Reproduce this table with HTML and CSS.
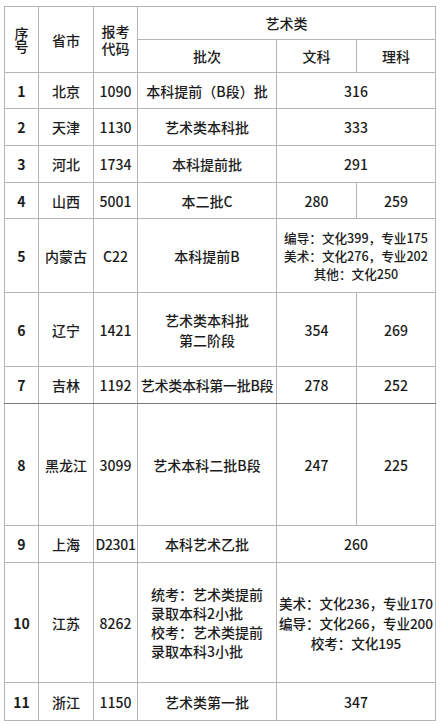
FILE: index.html
```html
<!DOCTYPE html>
<html lang="zh-CN">
<head>
<meta charset="utf-8">
<title>艺术类分数线</title>
<link rel="stylesheet" href="styles.css">
</head>
<body>
<div class="wrap">
<table class="score">
  <colgroup>
    <col class="c1"><col class="c2"><col class="c3"><col class="c4"><col class="c5"><col class="c6">
  </colgroup>
  <thead>
    <tr class="h1">
      <th rowspan="2" class="narrow">序号</th>
      <th rowspan="2">省市</th>
      <th rowspan="2" class="code">报考代码</th>
      <th colspan="3">艺术类</th>
    </tr>
    <tr class="h2">
      <th>批次</th>
      <th>文科</th>
      <th>理科</th>
    </tr>
  </thead>
  <tbody>
    <tr class="r36"><td class="num">1</td><td>北京</td><td>1090</td><td>本科提前（B段）批</td><td colspan="2">316</td></tr>
    <tr class="r37"><td class="num">2</td><td>天津</td><td>1130</td><td>艺术类本科批</td><td colspan="2">333</td></tr>
    <tr class="r37"><td class="num">3</td><td>河北</td><td>1734</td><td>本科提前批</td><td colspan="2">291</td></tr>
    <tr class="r36"><td class="num">4</td><td>山西</td><td>5001</td><td>本二批C</td><td>280</td><td>259</td></tr>
    <tr class="r74"><td class="num">5</td><td>内蒙古</td><td>C22</td><td>本科提前B</td><td colspan="2" class="small">编导：文化399，专业175<br>美术：文化276，专业202<br>其他：文化250</td></tr>
    <tr class="r74"><td class="num">6</td><td>辽宁</td><td>1421</td><td>艺术类本科批<br>第二阶段</td><td>354</td><td>269</td></tr>
    <tr class="r37 dark"><td class="num">7</td><td>吉林</td><td>1192</td><td class="tight">艺术类本科第一批B段</td><td>278</td><td>252</td></tr>
    <tr class="r122"><td class="num">8</td><td>黑龙江</td><td>3099</td><td>艺术本科二批B段</td><td>247</td><td>225</td></tr>
    <tr class="r37"><td class="num">9</td><td>上海</td><td class="tight">D2301</td><td>本科艺术乙批</td><td colspan="2">260</td></tr>
    <tr class="r120"><td class="num">10</td><td>江苏</td><td>8262</td><td><div class="left">统考：艺术类提前<br>录取本科2小批<br>校考：艺术类提前<br>录取本科3小批</div></td><td colspan="2" class="wide">美术：文化236，专业170<br>编导：文化266，专业200<br>校考：文化195</td></tr>
    <tr class="r38"><td class="num">11</td><td>浙江</td><td>1150</td><td>艺术类第一批</td><td colspan="2">347</td></tr>
  </tbody>
</table>
</div>
</body>
</html>
```

FILE: styles.css
```css
html, body {
  margin: 0;
  padding: 0;
  background: #ffffff;
}

.wrap {
  padding: 6px 0 0 4px;
}

.score {
  border-collapse: collapse;
  table-layout: fixed;
  width: 431px;
  font-family: "Noto Sans CJK SC", "Noto Sans", sans-serif;
  font-size: 14px;
  color: #1c1c1c;
}

.c1 { width: 34px; }
.c2 { width: 55px; }
.c3 { width: 44px; }
.c4 { width: 139px; }
.c5 { width: 80px; }
.c6 { width: 79px; }

.score th,
.score td {
  border: 1px solid #b5b5b5;
  padding: 0;
  text-align: center;
  vertical-align: middle;
  font-weight: 500;
  line-height: 20px;
  white-space: nowrap;
}

.score th {
  font-weight: 500;
}

.h1 { height: 33px; }
.h2 { height: 33px; }

.score th.narrow {
  white-space: normal;
  line-height: 13px;
  padding: 0 9px;
}

.score th.code {
  white-space: normal;
  line-height: 17px;
  padding: 0 7px;
}

.r36 { height: 36px; }
.r37 { height: 37px; }
.r38 { height: 38px; }
.r74 { height: 74px; }
.r120 { height: 120px; }
.r122 { height: 122px; }

.dark td {
  border-bottom-color: #7a7a7a;
}

.score td.num {
  font-weight: 600;
}

.score td.small {
  font-size: 12.6px;
  line-height: 18px;
}

.score td.wide {
  font-size: 13.6px;
  line-height: 20px;
  letter-spacing: -0.1px;
}

.score td.tight {
  letter-spacing: -0.3px;
}

.left {
  display: inline-block;
  text-align: left;
  line-height: 19px;
}
```
